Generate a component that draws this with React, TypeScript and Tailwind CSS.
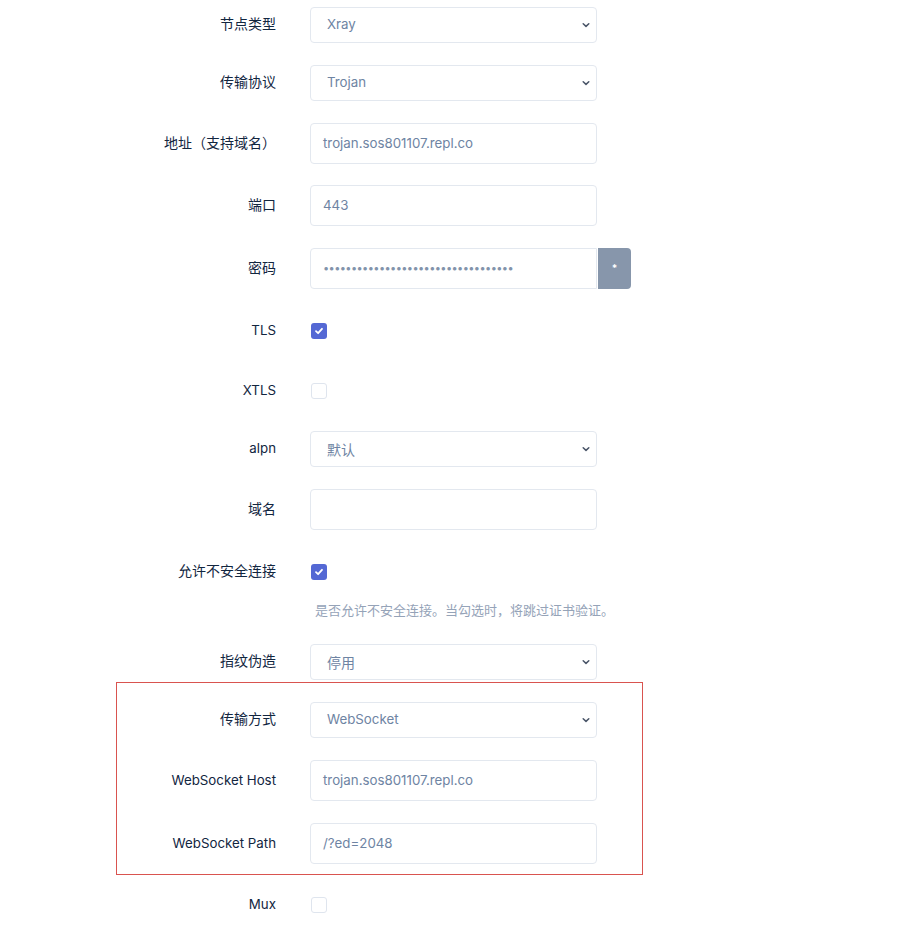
import React from "react";

const font = { fontFamily: "Inter, 'Noto Sans CJK SC', sans-serif" };

function Chevron() {
  return (
    <svg width="10" height="10" viewBox="0 0 10 10" className="absolute right-[5px] top-1/2 -translate-y-1/2">
      <path d="M2.2 3.7 L5 6.4 L7.8 3.7" fill="none" stroke="#4a5568" strokeWidth="1.5" strokeLinecap="round" strokeLinejoin="round" />
    </svg>
  );
}

function Label({ text, w = 160, latin }: { text: string; w?: number; latin?: boolean }) {
  return (
    <div
      className={`shrink-0 text-right leading-5 text-[#12263f] pb-[2px] ${latin ? "text-[13.3px]" : "text-[14px]"}`}
      style={{ width: w }}
    >
      {text}
    </div>
  );
}

function Select({ value, latin }: { value: string; latin?: boolean }) {
  return (
    <div
      className={`relative w-[287px] h-[36px] rounded-[4px] border border-[#e3e8ef] bg-white flex items-center pl-[16px] text-[#6e84a3] ${
        latin ? "text-[13.3px]" : "text-[14px]"
      }`}
    >
      {value}
      <Chevron />
    </div>
  );
}

function Input({ value, pwd }: { value: string; pwd?: boolean }) {
  return (
    <div
      className={`w-[287px] h-[41px] border border-[#e3e8ef] bg-white flex items-center pl-[12px] text-[13.3px] text-[#6e84a3] ${
        pwd ? "rounded-l-[4px]" : "rounded-[4px]"
      }`}
    >
      {pwd ? (
        <span className="tracking-[-0.6px] text-[#8293ab] text-[11px] leading-none">{value}</span>
      ) : (
        value
      )}
    </div>
  );
}

function Check({ on }: { on?: boolean }) {
  return on ? (
    <div className="w-[16px] h-[16px] rounded-[3px] bg-[#5468d4] flex items-center justify-center">
      <svg width="10" height="10" viewBox="0 0 10 10">
        <path d="M2 5.2 L4.1 7.2 L8 2.8" fill="none" stroke="#fff" strokeWidth="1.8" strokeLinecap="round" strokeLinejoin="round" />
      </svg>
    </div>
  ) : (
    <div className="w-[16px] h-[16px] rounded-[3px] border border-[#dfe5ee] bg-white" />
  );
}

function Row({
  label,
  children,
  w = 160,
  latin,
  className = "mb-[22px]",
}: {
  label: string;
  children: React.ReactNode;
  w?: number;
  latin?: boolean;
  className?: string;
}) {
  return (
    <div className={`flex items-center gap-[34px] ${className}`}>
      <Label text={label} w={w} latin={latin} />
      {children}
    </div>
  );
}

function CheckRow({ label, on, className = "mb-[22px]" }: { label: string; on?: boolean; className?: string }) {
  return (
    <div className={`flex items-center gap-[35px] h-[38px] ${className}`}>
      <Label text={label} latin />
      <Check on={on} />
    </div>
  );
}

export default function App() {
  const dots = "•".repeat(34);
  return (
    <div className="w-[900px] h-[927px] bg-white overflow-hidden pt-[7px]" style={font}>
      <div className="ml-[116px]">
        <Row label="节点类型">
          <Select value="Xray" latin />
        </Row>
        <Row label="传输协议">
          <Select value="Trojan" latin />
        </Row>
        <Row label="地址（支持域名）" className="mb-[21px]">
          <Input value="trojan.sos801107.repl.co" />
        </Row>
        <Row label="端口" className="mb-[22px]">
          <Input value="443" />
        </Row>
        <Row label="密码" className="mb-[23px]">
          <div className="flex">
            <Input value={dots} pwd />
            <div className="ml-[1px] w-[33px] h-[41px] rounded-r-[4px] bg-[#8796ab] flex items-center justify-center text-white text-[10px] font-bold">
              *
            </div>
          </div>
        </Row>
        <CheckRow label="TLS" on />
        <CheckRow label="XTLS" className="mb-[21px]" />
        <Row label="alpn" latin>
          <Select value="默认" />
        </Row>
        <Row label="域名" className="mb-[23px]">
          <Input value="" />
        </Row>
        <div className="flex items-start gap-[34px] mb-[24px]">
          <div className="shrink-0 w-[160px] h-[38px] flex items-center justify-end">
            <span className="text-[14px] leading-5 text-[#12263f] pb-[2px]">允许不安全连接</span>
          </div>
          <div className="flex flex-col">
            <div className="h-[38px] flex items-center pl-[1px]">
              <Check on />
            </div>
            <div className="mt-[9px] pl-[5px] text-[13px] leading-5 text-[#95a3b8]">
              是否允许不安全连接。当勾选时，将跳过证书验证。
            </div>
          </div>
        </div>
        <Row label="指纹伪造" className="mb-[2px]">
          <Select value="停用" />
        </Row>
        <div className="w-[527px] border border-[#d9534f] pt-[19px] pb-[10px]">
          <Row label="传输方式" w={159}>
            <Select value="WebSocket" latin />
          </Row>
          <Row label="WebSocket Host" w={159} latin className="mb-[22px]">
            <Input value="trojan.sos801107.repl.co" />
          </Row>
          <Row label="WebSocket Path" w={159} latin className="mb-0">
            <Input value="/?ed=2048" />
          </Row>
        </div>
        <CheckRow label="Mux" className="mt-[11px]" />
      </div>
    </div>
  );
}
